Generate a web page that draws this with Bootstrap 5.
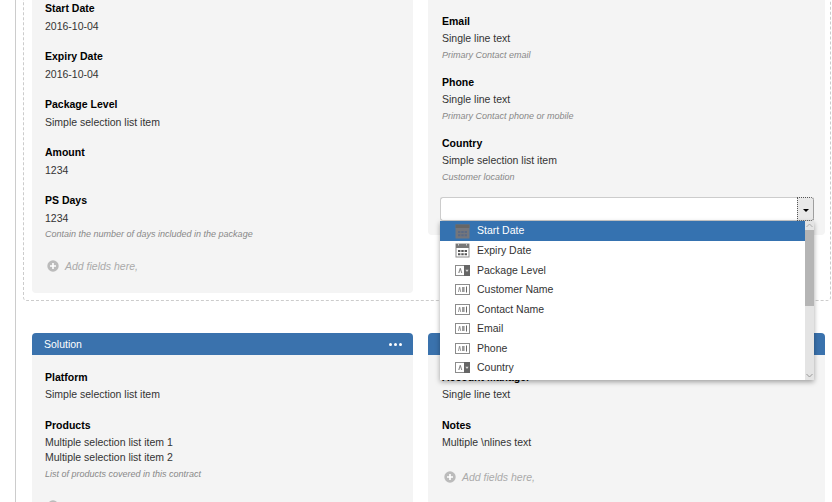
<!DOCTYPE html>
<html lang="en">
<head>
<meta charset="utf-8">
<title>Contract form</title>
<link href="https://cdn.jsdelivr.net/npm/bootstrap@5.3.0/dist/css/bootstrap.min.css" rel="stylesheet">
<style>
html,body{height:502px;overflow:hidden;background:#fff}
body{font-family:"Liberation Sans",Arial,sans-serif;font-size:10.5px;color:#333}
.shell{margin-left:15px;border-left:1px solid #ccc;padding-left:7px;height:522px;margin-top:-20px}
.drop-zone{border:1px dashed #ccc;border-top:0;border-radius:0 0 4px 4px;padding:0 5px 7px 8px;width:808px}
.lane{gap:15px}
.pane-l{flex:0 0 381px;width:381px}
.pane-r{flex:0 0 397px;width:397px}
.pane-body{background:#f4f4f4;border-radius:0 0 4px 4px;padding:13px 12px 19px 13px}
.pane-r .pane-body,.pane-body.pane-r{padding-left:14px;padding-right:11px}
.first-l{padding-top:18px;padding-bottom:19px}
.first-r{padding-top:32px;padding-bottom:14px;align-self:flex-start}
.lower{margin:32px 0 0 9px;padding-left:0}
.pane-head{background:#3a72ad;color:#fff;height:22px;border-radius:4px 4px 0 0;padding:1px 11px 0 12px}
.pane-r .pane-head{padding-right:14px}
.dots{display:flex;gap:1.5px}
.dots i{width:3.5px;height:3.5px;border-radius:50%;background:#fff;display:block}
.fld{margin-bottom:14px}
.fld-lab{font-weight:700;color:#000;line-height:19px;display:block}
.fld-val{line-height:15px;color:#333}
.fld-hint{font-size:9px;font-style:italic;color:#888;line-height:13px;margin-top:3px}
.fld.has-hint{margin-bottom:11px}
.tall .fld{margin-bottom:12px}
.tall .fld-lab{line-height:21px}
.tall .fld-hint{margin-top:2px}
.adder{color:#aaa;font-style:italic;line-height:16px;gap:6px;padding-left:2px;margin-top:19px}
.has-hint + .adder,.tall .adder{margin-top:17px}
.adder svg{flex:none}
.combo{position:relative;margin:13px 0 0 -2px}
.combo .input-group{height:24px}
.combo-input.form-control{height:24px;min-height:0;padding:0 6px;font-size:11px;border-color:#ccc;border-radius:3px 0 0 3px;border-right:0}
.btn.combo-btn{width:17px;height:24px;padding:0;background-color:#e9e9e9;border:1px dotted #555;border-radius:0 3px 3px 0;color:#000;font-size:11px;line-height:20px}
.combo-btn.dropdown-toggle::after{margin-left:0;vertical-align:1px}
.pop{position:absolute;left:0;right:0;top:24px;height:159px;background:#fff;box-shadow:0 2px 5px rgba(0,0,0,.35);z-index:5;display:flex}
.pop .list-group{flex:1 1 auto;--bs-list-group-border-width:0;--bs-list-group-border-radius:0;--bs-list-group-bg:#fff;--bs-list-group-color:#333;--bs-list-group-item-padding-x:15px;--bs-list-group-item-padding-y:0;--bs-list-group-active-bg:#3572b0;--bs-list-group-active-color:#fff;display:block}
.pop .list-group-item{line-height:19.5px;height:19.5px;font-size:10.5px;display:flex;align-items:center;gap:7px}
.pop .list-group-item.active{height:20px}
.pop .list-group-item svg{flex:none;width:15px;height:15px}
.track{flex:0 0 9px;background:#e4e4e4;display:flex;flex-direction:column;justify-content:space-between}
.arrow{height:9px;display:flex;align-items:center;justify-content:center}
.thumb{height:76px;background:#b5b5b5}
.track-gap{flex:1}
</style>
</head>
<body>
<svg width="0" height="0" class="position-absolute">
  <symbol id="ic-cal" viewBox="0 0 15 15">
    <rect x="1" y="1" width="13" height="13" fill="#fff" stroke="#8a8a8a"/>
    <rect x="1" y="1" width="13" height="4" fill="#777"/>
    <rect x="3" y="0.5" width="1" height="2" fill="#ccc"/><rect x="11" y="0.5" width="1" height="2" fill="#ccc"/>
    <path d="M3 7h2.4v2H3zM6.3 7h2.4v2H6.3zM9.6 7H12v2H9.6zM3 10.2h2.4v2H3zM6.3 10.2h2.4v2H6.3zM9.6 10.2H12v2H9.6z" fill="#555"/>
  </symbol>
  <symbol id="ic-cal-on" viewBox="0 0 15 15">
    <rect x="0.5" y="0.5" width="14" height="14" fill="#74767c"/>
    <rect x="0.5" y="0.5" width="14" height="3.5" fill="#666"/>
    <path d="M3 7h2.4v2H3zM6.3 7h2.4v2H6.3zM9.6 7H12v2H9.6zM3 10.2h2.4v2H3zM6.3 10.2h2.4v2H6.3zM9.6 10.2H12v2H9.6z" fill="#5b6a84"/>
  </symbol>
  <symbol id="ic-sel" viewBox="0 0 15 15">
    <rect x="0.5" y="2.5" width="14" height="10" fill="#fff" stroke="#8c8c8c"/>
    <rect x="9" y="2" width="6" height="11" fill="#666"/>
    <path d="M10.4 6.8h3.2L12 9z" fill="#ddd"/>
    <path d="M3.2 10 4.8 5h.9l1.6 5H6.2l-.9-3-.9 3z" fill="#8a8a8a"/>
  </symbol>
  <symbol id="ic-txt" viewBox="0 0 15 15">
    <rect x="0.5" y="2.5" width="14" height="10" fill="#fff" stroke="#8c8c8c"/>
    <path d="M3 10l1-5h1.2l1 5H5.3l-.7-3-.7 3zM7 5h2.6v5H7z" fill="#9a9a9a"/>
    <rect x="11" y="4.5" width="1" height="6" fill="#666"/>
  </symbol>
  <symbol id="ic-add" viewBox="0 0 12 12">
    <circle cx="6" cy="6" r="5.7" fill="#bbb"/>
    <path d="M3 5.2h2.2V3h1.6v2.2H9v1.6H6.8V9H5.2V6.8H3z" fill="#fff"/>
  </symbol>
</svg>

<div class="shell">
  <div class="drop-zone">
    <div class="d-flex lane">
      <div class="pane-l pane-body first-l tall">
        <div class="fld"><span class="fld-lab">Start Date</span><div class="fld-val">2016-10-04</div></div>
        <div class="fld"><span class="fld-lab">Expiry Date</span><div class="fld-val">2016-10-04</div></div>
        <div class="fld"><span class="fld-lab">Package Level</span><div class="fld-val">Simple selection list item</div></div>
        <div class="fld"><span class="fld-lab">Amount</span><div class="fld-val">1234</div></div>
        <div class="fld"><span class="fld-lab">PS Days</span><div class="fld-val">1234</div><div class="fld-hint">Contain the number of days included in the package</div></div>
        <div class="adder d-flex align-items-center"><svg width="12" height="12"><use href="#ic-add"/></svg><span>Add fields here,</span></div>
      </div>
      <div class="pane-r pane-body first-r">
        <div class="fld has-hint"><span class="fld-lab">Email</span><div class="fld-val">Single line text</div><div class="fld-hint">Primary Contact email</div></div>
        <div class="fld has-hint"><span class="fld-lab">Phone</span><div class="fld-val">Single line text</div><div class="fld-hint">Primary Contact phone or mobile</div></div>
        <div class="fld has-hint"><span class="fld-lab">Country</span><div class="fld-val">Simple selection list item</div><div class="fld-hint">Customer location</div></div>
        <div class="combo">
          <div class="input-group">
            <input type="text" class="form-control combo-input" aria-label="Add field">
            <button type="button" class="btn combo-btn dropdown-toggle" aria-label="Open"></button>
          </div>
          <div class="pop">
            <div class="list-group">
              <div class="list-group-item active"><svg><use href="#ic-cal-on"/></svg>Start Date</div>
              <div class="list-group-item"><svg><use href="#ic-cal"/></svg>Expiry Date</div>
              <div class="list-group-item"><svg><use href="#ic-sel"/></svg>Package Level</div>
              <div class="list-group-item"><svg><use href="#ic-txt"/></svg>Customer Name</div>
              <div class="list-group-item"><svg><use href="#ic-txt"/></svg>Contact Name</div>
              <div class="list-group-item"><svg><use href="#ic-txt"/></svg>Email</div>
              <div class="list-group-item"><svg><use href="#ic-txt"/></svg>Phone</div>
              <div class="list-group-item"><svg><use href="#ic-sel"/></svg>Country</div>
            </div>
            <div class="track">
              <div class="arrow"><svg width="7" height="5" viewBox="0 0 7 5"><path d="M.5 4 3.5 1l3 3" fill="none" stroke="#aaa"/></svg></div>
              <div class="thumb"></div>
              <div class="track-gap"></div>
              <div class="arrow"><svg width="7" height="5" viewBox="0 0 7 5"><path d="M.5 1l3 3 3-3" fill="none" stroke="#999"/></svg></div>
            </div>
          </div>
        </div>
      </div>
    </div>
  </div>

  <div class="d-flex lane lower">
    <div class="pane-l">
      <div class="pane-head d-flex justify-content-between align-items-center"><span>Solution</span><span class="dots"><i></i><i></i><i></i></span></div>
      <div class="pane-body">
        <div class="fld"><span class="fld-lab">Platform</span><div class="fld-val">Simple selection list item</div></div>
        <div class="fld has-hint"><span class="fld-lab">Products</span><div class="fld-val">Multiple selection list item 1</div><div class="fld-val">Multiple selection list item 2</div><div class="fld-hint">List of products covered in this contract</div></div>
        <div class="adder d-flex align-items-center"><svg width="12" height="12"><use href="#ic-add"/></svg><span>Add fields here,</span></div>
      </div>
    </div>
    <div class="pane-r">
      <div class="pane-head d-flex justify-content-between align-items-center"><span>&nbsp;</span><span class="dots"><i></i><i></i><i></i></span></div>
      <div class="pane-body">
        <div class="fld"><span class="fld-lab">Account Manager</span><div class="fld-val">Single line text</div></div>
        <div class="fld"><span class="fld-lab">Notes</span><div class="fld-val">Multiple \nlines text</div></div>
        <div class="adder d-flex align-items-center"><svg width="12" height="12"><use href="#ic-add"/></svg><span>Add fields here,</span></div>
      </div>
    </div>
  </div>
</div>
<script src="https://cdn.jsdelivr.net/npm/bootstrap@5.3.0/dist/js/bootstrap.bundle.min.js"></script>
</body>
</html>
